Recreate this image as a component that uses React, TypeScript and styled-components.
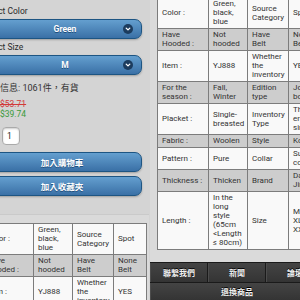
import styled, { createGlobalStyle } from "styled-components";

const GlobalStyle = createGlobalStyle`
  html, body {
    margin: 0;
    padding: 0;
  }
  body {
    font-family: Roboto, "Noto Sans CJK TC", sans-serif;
    background: #d4d4d4;
  }
`;

const Screen = styled.div`
  display: flex;
  width: 300px;
  height: 300px;
  overflow: hidden;
`;

const Viewport = styled.div<{ $bg: string }>`
  width: 150px;
  height: 300px;
  flex-shrink: 0;
  overflow: hidden;
  background: ${({ $bg }) => $bg};
`;

// one mobile page, shifted inside its viewport as if scrolled
const PageColumn = styled.div<{ $scrollX?: number }>`
  width: 174px;
  margin-left: ${({ $scrollX = 0 }) => -$scrollX}px;
`;

const FormSection = styled.div`
  display: flex;
  flex-direction: column;
  padding: 6px 7px 14px;
  background: #d4d4d4;
  border-bottom: 1px solid #cacaca;
`;

const FieldLabel = styled.div`
  height: 11px;
  font-size: 8.5px;
  line-height: 11px;
  color: #2a2a2a;
  margin-bottom: 2px;
`;

const BlueButton = styled.div<{ $withIcon?: boolean }>`
  display: flex;
  align-items: center;
  box-sizing: border-box;
  height: 20px;
  flex-shrink: 0;
  padding: ${({ $withIcon }) => ($withIcon ? "0 8px 0 24px" : "0 8px")};
  border: 1px solid #1d5583;
  border-radius: 7px;
  background: linear-gradient(#649fcf, #3a70a6);
  box-shadow: 0 1px 2px rgba(0, 0, 0, 0.25);
  color: #fff;
  font-size: 8.5px;
  font-weight: bold;
  text-shadow: 0 1px 0 #1d4d7c;
  margin-bottom: ${({ $withIcon }) => ($withIcon ? "3px" : "4px")};
`;

const ButtonText = styled.span`
  flex: 1;
  text-align: center;
`;

const IconDisc = styled.span`
  display: flex;
  align-items: center;
  justify-content: center;
  width: 10px;
  height: 10px;
  border-radius: 50%;
  background: #1c3c5e;
`;

const InfoText = styled.div`
  display: flex;
  align-items: center;
  height: 11px;
  margin-top: 4px;
  font-size: 9px;
  white-space: nowrap;
  color: #333;
`;

const PriceBlock = styled.div`
  margin-top: 6px;
  display: flex;
  flex-direction: column;
`;

const PriceLine = styled.div<{ $old?: boolean }>`
  display: flex;
  align-items: center;
  height: 10px;
  font-size: 8.5px;
  white-space: nowrap;
  color: ${({ $old }) => ($old ? "#d23a3a" : "#3a9a3a")};
`;

const PriceTag = styled.span`
  width: 18px;
  overflow: hidden;
  color: #333;
`;

const PriceValue = styled.span<{ $old?: boolean }>`
  text-decoration: ${({ $old }) => ($old ? "line-through" : "none")};
`;

const QtyRow = styled.div`
  display: flex;
  align-items: center;
  gap: 2px;
  height: 18px;
  margin: 8px 0 7px;
  font-size: 9px;
  color: #333;
`;

const QtyLabel = styled.span`
  width: 18px;
  overflow: hidden;
  white-space: nowrap;
`;

const QtyInput = styled.input`
  box-sizing: border-box;
  width: 18px;
  height: 18px;
  margin: 0;
  padding: 0 0 0 4px;
  border: 1px solid #aaa;
  border-radius: 4px;
  background: #fff;
  box-shadow: inset 0 1px 2px rgba(0, 0, 0, 0.2);
  font-family: Roboto, sans-serif;
  font-size: 8.5px;
  color: #222;
  outline: none;
`;

const TableSection = styled.div<{ $pullUp?: number }>`
  padding: 8px 7px 12px;
  margin-top: ${({ $pullUp = 0 }) => -$pullUp}px;
  background: #dadada;
`;

const SpecTable = styled.table`
  width: 164px;
  table-layout: fixed;
  border-collapse: collapse;
  font-size: 8px;
  line-height: 9px;
  color: #333;
`;

const SpecRow = styled.tr<{ $shaded: boolean }>`
  background: ${({ $shaded }) => ($shaded ? "#cdcdcd" : "#f9f9f9")};
`;

const SpecCell = styled.td`
  padding: 1px 4px 2px 4px;
  border: 1px solid #7c7c7c;
  vertical-align: middle;
  text-align: left;
  overflow: hidden;
`;

const FooterNav = styled.nav`
  display: flex;
  flex-direction: column;
  background: #2e2e2e;
  border-top: 1px solid #1a1a1a;
`;

const NavRow = styled.div<{ $cols: number; $height: number }>`
  display: grid;
  grid-template-columns: repeat(${({ $cols }) => $cols}, 1fr);
  height: ${({ $height }) => $height}px;
  border-bottom: 1px solid #1a1a1a;
`;

const NavItem = styled.a`
  display: flex;
  align-items: center;
  justify-content: center;
  background: linear-gradient(#444, #343434);
  border-right: 1px solid #1a1a1a;
  border-left: 1px solid #4c4c4c;
  color: #f2f2f2;
  font-size: 8px;
  font-weight: bold;
  text-shadow: 0 -1px 0 #000;
  text-decoration: none;
`;

const specs: [string, string, string, string][] = [
  ["Color :", "Green, black, blue", "Source Category", "Spot"],
  ["Have Hooded :", "Not hooded", "Have Belt", "None Belt"],
  ["Item :", "YJ888", "Whether the inventory", "YES"],
  ["For the season :", "Fall, Winter", "Edition type", "Joker body"],
  ["Placket :", "Single-breasted", "Inventory Type", "The entire single"],
  ["Fabric :", "Woolen", "Style", "Korean"],
  ["Pattern :", "Pure", "Collar", "Suit collar"],
  ["Thickness :", "Thicken", "Brand", "Dai Jin"],
  ["Length :", "In the long style (65cm <Length ≤ 80cm)", "Size", "M, L, XL, XXL"],
];

const colWidths = [51, 39, 41, 33];

const ChevronDown = () => (
  <svg width="6" height="6" viewBox="0 0 10 10">
    <path d="M2 3.5 L5 6.5 L8 3.5" fill="none" stroke="#fff" strokeWidth="2.2" strokeLinecap="round" strokeLinejoin="round" />
  </svg>
);

const SelectBox = ({ value }: { value: string }) => (
  <BlueButton $withIcon>
    <ButtonText>{value}</ButtonText>
    <IconDisc>
      <ChevronDown />
    </IconDisc>
  </BlueButton>
);

const SpecsTable = ({ pullUp }: { pullUp?: number }) => (
  <TableSection $pullUp={pullUp}>
    <SpecTable>
      <colgroup>
        {colWidths.map((w, i) => (
          <col key={i} style={{ width: w }} />
        ))}
      </colgroup>
      <tbody>
        {specs.map((row, i) => (
          <SpecRow key={row[0]} $shaded={i % 2 === 1}>
            {row.map((cell, j) => (
              <SpecCell key={j}>{cell}</SpecCell>
            ))}
          </SpecRow>
        ))}
      </tbody>
    </SpecTable>
  </TableSection>
);

export default function App() {
  return (
    <>
      <GlobalStyle />
      <Screen>
        <Viewport $bg="#d4d4d4">
          <PageColumn $scrollX={25}>
            <FormSection>
              <FieldLabel>Select Color</FieldLabel>
              <SelectBox value="Green" />
              <FieldLabel>Select Size</FieldLabel>
              <SelectBox value="M" />
              <InfoText>庫存信息: 1061件，有貨</InfoText>
              <PriceBlock>
                <PriceLine $old>
                  <PriceTag>原價</PriceTag>
                  <PriceValue $old>$53.71</PriceValue>
                </PriceLine>
                <PriceLine>
                  <PriceTag>特價</PriceTag>
                  <PriceValue>$39.74</PriceValue>
                </PriceLine>
              </PriceBlock>
              <QtyRow>
                <QtyLabel>數量</QtyLabel>
                <QtyInput defaultValue="1" />
              </QtyRow>
              <BlueButton>
                <ButtonText>加入購物車</ButtonText>
              </BlueButton>
              <BlueButton>
                <ButtonText>加入收藏夾</ButtonText>
              </BlueButton>
            </FormSection>
            <SpecsTable />
          </PageColumn>
        </Viewport>
        <Viewport $bg="#dadada">
          <PageColumn>
            <SpecsTable pullUp={11} />
            <FooterNav>
              <NavRow $cols={3} $height={19}>
                <NavItem href="#">聯繫我們</NavItem>
                <NavItem href="#">新聞</NavItem>
                <NavItem href="#">論壇</NavItem>
              </NavRow>
              <NavRow $cols={1} $height={17}>
                <NavItem href="#">退換商品</NavItem>
              </NavRow>
              <NavRow $cols={3} $height={19}>
                <NavItem href="#">關於我們</NavItem>
                <NavItem href="#">付款方式</NavItem>
                <NavItem href="#">配送方式</NavItem>
              </NavRow>
            </FooterNav>
          </PageColumn>
        </Viewport>
      </Screen>
    </>
  );
}
